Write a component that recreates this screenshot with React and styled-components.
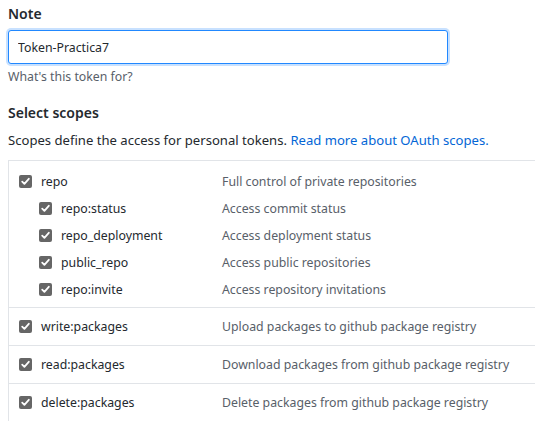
import React from "react";
import styled, { createGlobalStyle } from "styled-components";

const Global = createGlobalStyle`
  html, body { margin: 0; padding: 0; background: #fff; }
  body { font-family: "Noto Sans", "Open Sans", sans-serif; color: #24292e; overflow: hidden; }
`;

const Page = styled.div`
  padding: 4px 0 0 8px;
`;

const Label = styled.div`
  font-size: 14px;
  font-weight: 600;
  line-height: 20px;
`;

const Input = styled.input`
  display: block;
  box-sizing: border-box;
  margin-top: 6px;
  width: 440px;
  height: 34px;
  padding: 0 9px;
  font-family: inherit;
  font-size: 12.3px;
  color: #24292e;
  border: 1px solid #2188ff;
  border-radius: 3px;
  box-shadow: 0 0 0 2px #c8e1ff;
  outline: none;
`;

const Hint = styled.div`
  margin-top: 4px;
  font-size: 12.3px;
  line-height: 18px;
  color: #586069;
`;

const Heading = styled(Label)`
  margin-top: 17px;
`;

const Desc = styled.div`
  margin-top: 7px;
  font-size: 13.1px;
  line-height: 20px;
  color: #24292e;
  a { color: #0366d6; text-decoration: none; }
`;

const Box = styled.div`
  margin-top: 10px;
  box-sizing: border-box;
  width: 527px;
  border: 1px solid #e1e4e8;
  border-right: none;
`;

const Group = styled.div`
  padding: ${(p) => (p.$multi ? "7px 0 4px" : "0")};
  border-top: ${(p) => (p.$first ? "none" : "1px solid #e1e4e8")};
`;

const Row = styled.div`
  display: grid;
  grid-template-columns: 213px 1fr;
  align-items: center;
  height: ${(p) => (p.$tall ? "37px" : "27px")};
  font-size: 12.3px;
`;

const Scope = styled.div`
  display: flex;
  align-items: center;
  gap: 9px;
  padding-left: ${(p) => (p.$sub ? "30px" : "10px")};
  color: #24292e;
`;

const Check = styled.span`
  display: inline-flex;
  align-items: center;
  justify-content: center;
  width: 13px;
  height: 13px;
  border-radius: 2px;
  background: #666;
  flex: none;
`;

const Info = styled.div`
  color: #586069;
`;

const Tick = () => (
  <Check>
    <svg width="11" height="11" viewBox="0 0 11 11">
      <path d="M2.2 5.6 L4.4 7.8 L8.8 2.8" fill="none" stroke="#fff" strokeWidth="1.8" strokeLinecap="round" strokeLinejoin="round" />
    </svg>
  </Check>
);

const ScopeRow = ({ name, info, sub, tall }) => (
  <Row $tall={tall}>
    <Scope $sub={sub}>
      <Tick />
      <span>{name}</span>
    </Scope>
    <Info>{info}</Info>
  </Row>
);

export default function App() {
  return (
    <Page>
      <Global />
      <Label>Note</Label>
      <Input defaultValue="Token-Practica7" />
      <Hint>What's this token for?</Hint>
      <Heading>Select scopes</Heading>
      <Desc>
        Scopes define the access for personal tokens. <a href="#">Read more about OAuth scopes.</a>
      </Desc>
      <Box>
        <Group $first $multi>
          <ScopeRow name="repo" info="Full control of private repositories" />
          <ScopeRow sub name="repo:status" info="Access commit status" />
          <ScopeRow sub name="repo_deployment" info="Access deployment status" />
          <ScopeRow sub name="public_repo" info="Access public repositories" />
          <ScopeRow sub name="repo:invite" info="Access repository invitations" />
        </Group>
        <Group>
          <ScopeRow tall name="write:packages" info="Upload packages to github package registry" />
        </Group>
        <Group>
          <ScopeRow tall name="read:packages" info="Download packages from github package registry" />
        </Group>
        <Group>
          <ScopeRow tall name="delete:packages" info="Delete packages from github package registry" />
        </Group>
      </Box>
    </Page>
  );
}
